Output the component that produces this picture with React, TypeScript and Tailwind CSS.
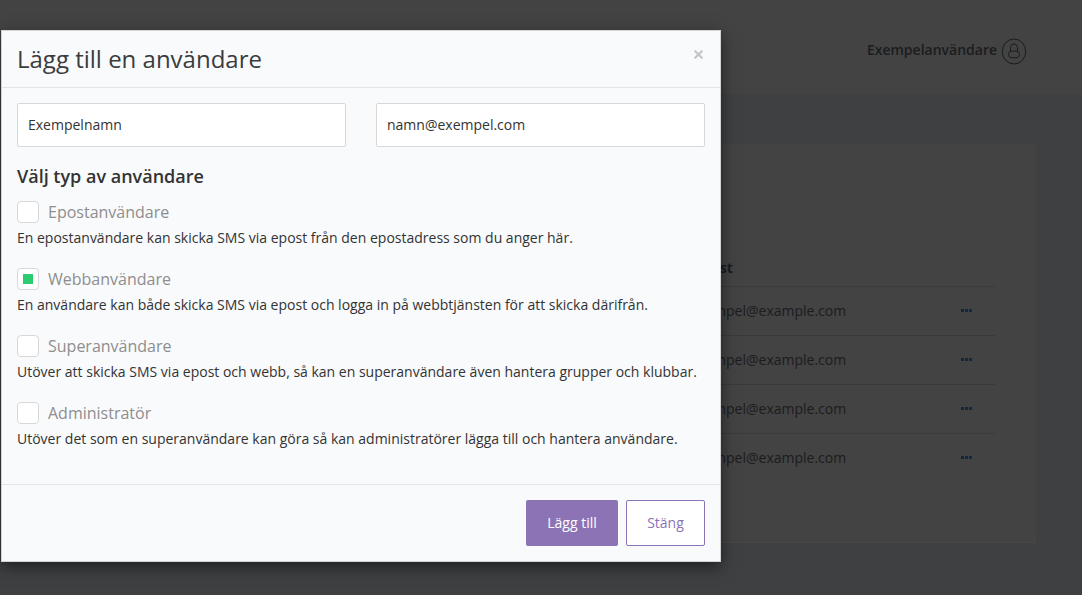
import { X } from "lucide-react";

const userTypes = [
  { name: "Epostanvändare", text: "En epostanvändare kan skicka SMS via epost från den epostadress som du anger här.", checked: false },
  { name: "Webbanvändare", text: "En användare kan både skicka SMS via epost och logga in på webbtjänsten för att skicka därifrån.", checked: true },
  { name: "Superanvändare", text: "Utöver att skicka SMS via epost och webb, så kan en superanvändare även hantera grupper och klubbar.", checked: false },
  { name: "Administratör", text: "Utöver det som en superanvändare kan göra så kan administratörer lägga till och hantera användare.", checked: false },
];

function Background() {
  return (
    <div className="min-h-[595px] bg-[#3f4042] text-[#1b1c1d]">
      <header className="h-[94px] bg-[#434343] flex items-center justify-end pr-[55px] pt-[8px]">
        <span className="text-[14px] font-semibold mr-[4px] pb-[4px]">Exempelanvändare</span>
        <svg width="26" height="27" viewBox="0 0 26 27" fill="none" stroke="#1b1c1d" strokeWidth="1">
          <ellipse cx="13" cy="13.5" rx="11.7" ry="12.5" />
          <path d="M9.5 13V9.4a3.5 3.5 0 0 1 7 0V13" />
          <rect x="7.5" y="13" width="11" height="6.8" rx="3.4" />
        </svg>
      </header>
      <div className="flex justify-end pt-[50px] pr-[46px]">
        <section className="w-[836px] h-[399px] bg-[#434343] border-b border-[#484848] pt-[114px] pl-[490px] pr-[41px]">
          <div className="h-[28px] text-[14px] font-bold leading-[20px]">E-post</div>
          {[0, 1, 2, 3].map((i) => (
            <div key={i} className="h-[49px] border-t border-[#3a3a3a] flex items-center justify-between pr-[23px] pb-[2px] text-[14px]">
              <span>exempel@example.com</span>
              <span className="flex gap-[1px]">
                <i className="w-[3px] h-[3px] bg-[#14283c]" />
                <i className="w-[3px] h-[3px] bg-[#14283c]" />
                <i className="w-[3px] h-[3px] bg-[#14283c]" />
              </span>
            </div>
          ))}
        </section>
      </div>
    </div>
  );
}

export default function App() {
  return (
    <div className="relative h-[595px] overflow-hidden font-['Open_Sans',sans-serif]">
      <Background />
      {/* Modal */}
      <div className="absolute left-[1px] top-[30px] w-[720px] h-[532px] flex flex-col bg-[#f9fafc] border border-[#d4d4d6] shadow-[0_5px_15px_rgba(0,0,0,0.5)] text-[#333]">
        <div className="h-[57px] shrink-0 border-b border-[#e5e5e5] flex items-start justify-between pl-[15px] pr-[15px]">
          <h1 className="text-[24px] leading-[33px] mt-[11px] text-[#3a3c3e]">Lägg till en användare</h1>
          <X className="w-[13px] h-[13px] mt-[17px] text-[#c4c4c4]" strokeWidth={4} />
        </div>
        <div className="flex-1 px-[15px] pt-[15px]">
          <div className="flex gap-[30px]">
            <input readOnly value="Exempelnamn" className="w-[329px] h-[44px] bg-white border border-[#d8d8d8] rounded-[2px] px-[10px] pb-[2px] text-[14px] text-[#333] outline-none" />
            <input readOnly value="namn@exempel.com" className="w-[329px] h-[44px] bg-white border border-[#d8d8d8] rounded-[2px] px-[10px] pb-[2px] text-[14px] text-[#333] outline-none" />
          </div>
          <h2 className="mt-[17px] text-[18px] leading-[24px] font-semibold text-[#333]">Välj typ av användare</h2>
          <div className="mt-[13px] flex flex-col gap-[20px]">
            {userTypes.map((t) => (
              <div key={t.name}>
                <div className="flex items-center gap-[9px] h-[22px]">
                  <span className="w-[22px] h-[22px] bg-white border border-[#d8d8d8] rounded-[4px] flex items-center justify-center">
                    {t.checked && <span className="w-[10px] h-[10px] bg-[#2ecc71]" />}
                  </span>
                  <span className="text-[16px] text-[#8e8e8e]">{t.name}</span>
                </div>
                <p className="mt-[5px] text-[14px] leading-[20px] text-[#333]">{t.text}</p>
              </div>
            ))}
          </div>
        </div>
        <div className="h-[77px] shrink-0 border-t border-[#e5e5e5] flex justify-end gap-[8px] pt-[15px] pr-[15px]">
          <button className="w-[92px] h-[46px] bg-[#8c73b5] rounded-[2px] pb-[2px] text-[14px] font-medium text-white">Lägg till</button>
          <button className="w-[79px] h-[46px] bg-white border border-[#8c73b5] rounded-[2px] pb-[2px] text-[14px] text-[#8c73b5]">Stäng</button>
        </div>
      </div>
    </div>
  );
}
